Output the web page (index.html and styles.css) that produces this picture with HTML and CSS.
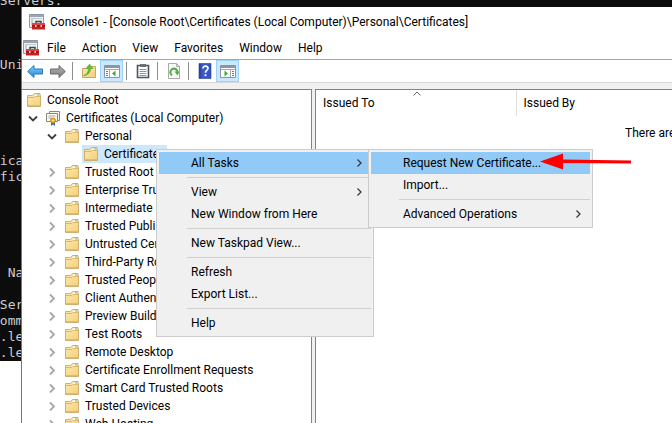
FILE: index.html
```html
<!DOCTYPE html>
<html lang="en">
<head>
<meta charset="utf-8">
<title>Console1</title>
<link rel="stylesheet" href="styles.css">
</head>
<body>
<svg class="sprite" aria-hidden="true">
  <defs>
    <linearGradient id="gold" x1="0" y1="0" x2="1" y2="1"><stop offset="0" stop-color="#ffe9ae"/><stop offset="1" stop-color="#f3d07a"/></linearGradient>
    <linearGradient id="sky" x1="0" y1="0" x2="0" y2="1"><stop offset="0" stop-color="#8bd0f8"/><stop offset="1" stop-color="#1686dc"/></linearGradient>
    <linearGradient id="steel" x1="0" y1="0" x2="0" y2="1"><stop offset="0" stop-color="#b5b5b5"/><stop offset="1" stop-color="#7c7c7c"/></linearGradient>
    <linearGradient id="royal" x1="0" y1="0" x2="1" y2="0"><stop offset="0" stop-color="#263c9a"/><stop offset=".3" stop-color="#3b5bc8"/><stop offset="1" stop-color="#3553bd"/></linearGradient>
  </defs>
  <symbol id="folder" viewBox="0 0 16 16">
    <path d="M1.500 3.500h5l2-2h5.500v2h.5v11h-13z" fill="url(#gold)" stroke="#cdb070"/>
    <path d="M8.500 4.500l1-2h4v2z" fill="#fff"/><path d="M11 3h2.500" stroke="#6fa8cc"/>
    <path d="M2 5.500h6l1-1h5" stroke="#d8b96f" fill="none"/>
    <path d="M2 13.500h12" stroke="#e5bd5c"/>
  </symbol>
  <symbol id="toolbox" viewBox="0 0 16 16">
    <path d="M.5.500h14v13H.5z" fill="#eef0f2" stroke="#8b98a5"/>
    <path d="M1 1h13v2H1z" fill="#9aa7b3"/><path d="M2 4.500h11" stroke="#c2cad1"/><path d="M3 5v7" stroke="#a5afb9"/>
    <path d="M7 9V7.500h5V9" fill="none" stroke="#444" stroke-width="1.500"/>
    <path d="M3 9h13v6.500H3z" fill="#c4221f"/><path d="M3 9h13v2H3z" fill="#dc4743"/>
    <path d="M3 12h13" stroke="#861312"/><path d="M6 11h1.500v2H6zM11.500 11H13v2h-1.500z" fill="#f4d6d5"/>
  </symbol>
  <symbol id="cert" viewBox="0 0 16 16">
    <path d="M4.500 1.500h10v9h-10z" fill="#f8f5e8" stroke="#8c8773"/>
    <path d="M1.500 3.500h11v8h-11z" fill="#fffdf4" stroke="#8c8773"/>
    <path d="M3.500 6h7M3.500 8h3" stroke="#a8a493"/>
    <path d="M6 11v5l2-1.500 2 1.500v-5z" fill="#2777bd"/><circle cx="8" cy="10.500" r="2.600" fill="#e7a91d" stroke="#b67c0d" stroke-width=".7"/><circle cx="8" cy="10.500" r="1" fill="#fff0a0"/>
  </symbol>
  <symbol id="right" viewBox="0 0 8 10"><path d="M2.500 1.500L6 5 2.500 8.500" fill="none" stroke="#333" stroke-width="1.200"/></symbol>
  <symbol id="closed" viewBox="0 0 10 10"><path d="M3 1.500L7 5.500 3 9.500" fill="none" stroke="#a6a6a6" stroke-width="1.800"/></symbol>
  <symbol id="open" viewBox="0 0 10 10"><path d="M1 3.500l4 4 4-4" fill="none" stroke="#404040" stroke-width="1.800"/></symbol>
</svg>

<pre class="terminal"> Servers:



 Uni





fica
 fic





  Na

 Ser
 omm
 .le
 .le</pre>

<main class="window">
  <header class="titlebar">
    <svg class="icon"><use href="#toolbox"/></svg>
    <span>Console1 - [Console Root\Certificates (Local Computer)\Personal\Certificates]</span>
  </header>
  <nav class="menubar">
    <svg class="icon"><use href="#toolbox"/></svg>
    <button>File</button><button>Action</button><button>View</button><button>Favorites</button><button>Window</button><button>Help</button>
  </nav>
  <div class="toolbar">
    <button class="tool" aria-label="Back"><svg class="icon" viewBox="0 0 16 16"><path d="M.7 8.500L7 2.500v3.500h8.500v5H7v3.500z" fill="url(#sky)" stroke="#2878b5"/></svg></button>
    <button class="tool" aria-label="Forward"><svg class="icon" viewBox="0 0 16 16"><path d="M15.300 8.500L9 2.500v3.500H.5v5H9v3.500z" fill="url(#steel)" stroke="#6b6b6b"/></svg></button>
    <i class="divider"></i>
    <button class="tool" aria-label="Up one level"><svg class="icon" viewBox="0 0 16 16"><path d="M1.500 5.500h6l1-2h6v11h-13z" fill="url(#gold)" stroke="#c9a75c"/><path d="M2.500 12.500c3.500-1 5-4 5-7H5L8.500 1.200 12 5.500H9.500c0 4-2.500 7-7 7z" fill="#64bd35" stroke="#4ea832" stroke-width=".6"/></svg></button>
    <button class="tool on" aria-label="Show or hide console tree"><svg class="icon" viewBox="0 0 16 16"><path d="M.5 2.500h15v12H.5z" fill="#fff" stroke="#8995a1"/><path d="M1 3h14v2H1z" fill="#8a96a2"/><path d="M1 6.500h14M5.500 7v7" stroke="#a0aab4"/><path d="M2 8.500h2M2 10.500h2M2 12.500h2" stroke="#68798b"/><path d="M11.500 7.500v6L8 10.500z" fill="#3cad37"/></svg></button>
    <i class="divider"></i>
    <button class="tool" aria-label="Properties"><svg class="icon" viewBox="0 0 16 16"><path d="M2.500 2.500h11v12h-11z" fill="#fff" stroke="#4a5560" stroke-width="1.600"/><path d="M5 1h6v3H5z" fill="#66717b"/><path d="M4.500 6.500h7M4.500 8.500h7M4.500 10.500h7M4.500 12.500h7" stroke="#8c959d"/></svg></button>
    <i class="divider"></i>
    <button class="tool" aria-label="Refresh"><svg class="icon" viewBox="0 0 16 16"><path d="M2.500.500h8l3 3v12h-11z" fill="#f8f8f8" stroke="#aaa"/><path d="M10.500.500v3h3" fill="none" stroke="#aaa"/><path d="M6 12.300a3.600 3.600 0 1 1 5.500-3.500" fill="none" stroke="#4caf3b" stroke-width="2"/><path d="M13.500 8.500h-5l3 4z" fill="#4caf3b"/></svg></button>
    <i class="divider"></i>
    <button class="tool" aria-label="Help"><svg class="icon" viewBox="0 0 16 16"><path d="M2 .500h12v15H2z" fill="url(#royal)" stroke="#263d94" stroke-width=".6"/><path d="M6 5.500C6 2.200 11.500 2.500 11 5.500c-.2 1.700-2.500 1.800-2.500 4.200" fill="none" stroke="#fff" stroke-width="1.700"/><path d="M7.600 11.300h1.800v1.800H7.600z" fill="#fff"/></svg></button>
    <button class="tool on" aria-label="Show or hide action pane"><svg class="icon" viewBox="0 0 16 16"><path d="M.5 2.500h15v12H.5z" fill="#fff" stroke="#8995a1"/><path d="M1 3h14v2H1z" fill="#8a96a2"/><path d="M1 6.500h14M10.500 7v7" stroke="#a0aab4"/><path d="M12 8.500h2M12 10.500h2M12 12.500h2" stroke="#68798b"/><path d="M4.500 7.500v6L8 10.500z" fill="#3cad37"/></svg></button>
  </div>

  <div class="panes">
    <section class="tree">
      <ul>
        <li><div class="row"><svg class="icon"><use href="#folder"/></svg>Console Root</div>
          <ul>
            <li><div class="row"><svg class="twist"><use href="#open"/></svg><svg class="icon"><use href="#cert"/></svg>Certificates (Local Computer)</div>
              <ul class="stores">
                <li><div class="row"><svg class="twist"><use href="#open"/></svg><svg class="icon"><use href="#folder"/></svg>Personal</div>
                  <ul class="leaves"><li><div class="row"><span class="selected"><svg class="icon"><use href="#folder"/></svg>Certificates</span></div></li></ul>
                </li>
                <li><div class="row"><svg class="twist"><use href="#closed"/></svg><svg class="icon"><use href="#folder"/></svg>Trusted Root Certification Authorities</div></li>
                <li><div class="row"><svg class="twist"><use href="#closed"/></svg><svg class="icon"><use href="#folder"/></svg>Enterprise Trust</div></li>
                <li><div class="row"><svg class="twist"><use href="#closed"/></svg><svg class="icon"><use href="#folder"/></svg>Intermediate Certification Authorities</div></li>
                <li><div class="row"><svg class="twist"><use href="#closed"/></svg><svg class="icon"><use href="#folder"/></svg>Trusted Publishers</div></li>
                <li><div class="row"><svg class="twist"><use href="#closed"/></svg><svg class="icon"><use href="#folder"/></svg>Untrusted Certificates</div></li>
                <li><div class="row"><svg class="twist"><use href="#closed"/></svg><svg class="icon"><use href="#folder"/></svg>Third-Party Root Certification Authorities</div></li>
                <li><div class="row"><svg class="twist"><use href="#closed"/></svg><svg class="icon"><use href="#folder"/></svg>Trusted People</div></li>
                <li><div class="row"><svg class="twist"><use href="#closed"/></svg><svg class="icon"><use href="#folder"/></svg>Client Authentication Issuers</div></li>
                <li><div class="row"><svg class="twist"><use href="#closed"/></svg><svg class="icon"><use href="#folder"/></svg>Preview Build Roots</div></li>
                <li><div class="row"><svg class="twist"><use href="#closed"/></svg><svg class="icon"><use href="#folder"/></svg>Test Roots</div></li>
                <li><div class="row"><svg class="twist"><use href="#closed"/></svg><svg class="icon"><use href="#folder"/></svg>Remote Desktop</div></li>
                <li><div class="row"><svg class="twist"><use href="#closed"/></svg><svg class="icon"><use href="#folder"/></svg>Certificate Enrollment Requests</div></li>
                <li><div class="row"><svg class="twist"><use href="#closed"/></svg><svg class="icon"><use href="#folder"/></svg>Smart Card Trusted Roots</div></li>
                <li><div class="row"><svg class="twist"><use href="#closed"/></svg><svg class="icon"><use href="#folder"/></svg>Trusted Devices</div></li>
                <li><div class="row"><svg class="twist"><use href="#closed"/></svg><svg class="icon"><use href="#folder"/></svg>Web Hosting</div></li>
              </ul>
            </li>
          </ul>
        </li>
      </ul>
    </section>
    <section class="list">
      <table>
        <thead><tr><th class="sorted">Issued To<svg class="sort" viewBox="0 0 8 5"><path d="M.5 4.500L4 1l3.500 3.500" fill="none" stroke="#666"/></svg></th><th>Issued By</th></tr></thead>
      </table>
      <p class="empty">There are no items to show in this view.</p>
    </section>
  </div>
</main>

<div class="menu context">
  <button class="item active">All Tasks<svg class="more"><use href="#right"/></svg></button>
  <hr>
  <button class="item">View<svg class="more"><use href="#right"/></svg></button>
  <button class="item">New Window from Here</button>
  <hr>
  <button class="item">New Taskpad View...</button>
  <hr>
  <button class="item">Refresh</button>
  <button class="item">Export List...</button>
  <hr>
  <button class="item">Help</button>
</div>
<div class="menu submenu">
  <button class="item active">Request New Certificate...</button>
  <button class="item">Import...</button>
  <hr>
  <button class="item">Advanced Operations<svg class="more"><use href="#right"/></svg></button>
</div>
<svg class="pointer" viewBox="0 0 92 18"><path d="M0 8.500L23 .500v6l68 1v3l-68-.500v6.500z" fill="#f00"/></svg>
</body>
</html>
```
FILE: styles.css
```css
* { box-sizing: border-box; }

body {
  position: relative;
  height: 100vh;
  margin: 0;
  overflow: hidden;
  background: #fff;
  color: #000;
  font: 12px/18px Roboto, "Open Sans", sans-serif;
}

button {
  padding: 0;
  border: 0;
  background: none;
  color: inherit;
  font: inherit;
}

svg { flex: none; }
.sprite { position: absolute; width: 0; height: 0; }
.icon { display: block; width: 16px; height: 16px; }

.terminal {
  position: absolute;
  inset: 0 0 auto -8px;
  display: flex;
  align-items: flex-end;
  height: 361px;
  margin: 0;
  background: #0c0c0c;
  color: #ccc;
  font: 13px/16px "DejaVu Sans Mono", monospace;
}

.window {
  position: absolute;
  inset: 7px 0 0 21px;
  display: flex;
  flex-direction: column;
  border-left: 1px solid #77777b;
  background: #fff;
}

.titlebar {
  display: flex;
  align-items: center;
  gap: 5px;
  height: 30px;
  padding-left: 7px;
}

.menubar {
  display: flex;
  align-items: center;
  gap: 16px;
  height: 23px;
  padding-left: 1px;
  border-bottom: 1px solid #a6a6a9;
}
.menubar .icon { margin-right: -8px; }

.toolbar {
  display: flex;
  align-items: center;
  height: 23px;
  padding-left: 1px;
  border-bottom: 1px solid #d8d8d8;
}
.tool {
  display: grid;
  place-items: center;
  width: 23px;
  height: 22px;
}
.on { border: 1px solid #99d1ff; background: #cce8ff; }
.divider {
  width: 1px;
  height: 18px;
  margin: 0 4px 0 3px;
  background: #8d8d8d;
}

.panes {
  display: grid;
  grid-template-columns: 290px 1fr;
  gap: 3px;
  flex: 1;
  min-height: 0;
  padding-top: 6px;
  background: #f0f0f0;
}

.tree, .list {
  overflow: hidden;
  border-top: 1px solid #828287;
  background: #fff;
  white-space: nowrap;
}
.tree { padding: 1px 0 0 4px; border-right: 1px solid #828287; }
.tree ul { margin: 0; padding: 0; list-style: none; }
.tree .stores { padding-left: 19px; }
.tree .leaves { padding-left: 37px; }
.row { display: flex; align-items: center; gap: 5px; height: 18px; }
.twist { width: 10px; height: 10px; margin: 0 2px; }
.selected {
  display: flex;
  gap: 5px;
  align-items: center;
  padding: 0 2px 0 1px;
  background: #cce8ff;
}

.list { border-left: 1px solid #828287; }
table { width: 100%; border-collapse: collapse; table-layout: fixed; }
th {
  height: 26px;
  padding: 0 7px;
  font-weight: normal;
  text-align: left;
}
.sorted { position: relative; width: 200px; border-right: 1px solid #e0e0e0; }
.sort { position: absolute; top: 1px; left: 50%; width: 8px; height: 5px; margin-left: -3px; }
.empty { margin: 8px 0 0 309px; }

.menu {
  position: absolute;
  display: flex;
  flex-direction: column;
  padding: 2px;
  border: 1px solid #ccc;
  background: #f1f0f1;
}
.context { top: 149px; left: 156px; width: 218px; }
.submenu { top: 149px; left: 368px; width: 225px; }
.item {
  display: flex;
  align-items: center;
  justify-content: space-between;
  height: 22px;
  padding: 0 8px 0 32px;
}
.active { background: #91c9f7; }
.more { width: 8px; height: 10px; }
.menu hr {
  height: 1px;
  margin: 3px 0 3px 28px;
  border: 0;
  background: #d0d0d0;
}

.pointer {
  position: absolute;
  top: 153px;
  left: 540px;
  width: 92px;
  height: 18px;
}
```
